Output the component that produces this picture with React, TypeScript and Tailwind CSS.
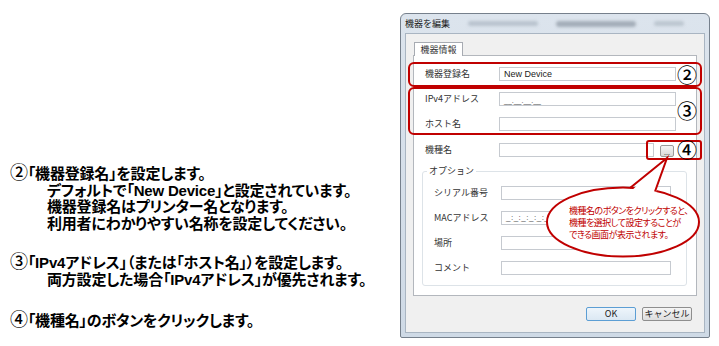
import React from 'react';

const ui = "font-['Noto_Sans_CJK_JP','Liberation_Sans',sans-serif] text-[9px] leading-[12px] text-[#333]";

const Box: React.FC<{ w: string; value?: React.ReactNode }> = ({ w, value }) => (
  <div className={`${w} h-[14px] border border-[#c6cad0] bg-white flex items-center px-[4px] text-[9px] text-[#222] font-['Liberation_Sans',sans-serif]`}>
    {value}
  </div>
);

const Row: React.FC<{ label: string; labelW: string; w: string; value?: React.ReactNode; className?: string; extra?: React.ReactNode }> = ({
  label,
  labelW,
  w,
  value,
  className = '',
  extra,
}) => (
  <div className={`flex items-center h-[14px] ${className}`}>
    <span className={`${labelW} shrink-0 whitespace-nowrap`}>{label}</span>
    <Box w={w} value={value} />
    {extra}
  </div>
);

// circled number, used in the instructions and on the red frames
const Num: React.FC<{ n: string; big?: boolean }> = ({ n, big }) => (
  <span
    className={`font-['Noto_Sans_CJK_JP',sans-serif] [font-feature-settings:normal] text-black font-medium ${
      big ? 'inline-block text-[20px] leading-[18px]' : 'text-[18px] leading-[16px]'
    }`}
  >
    {n}
  </span>
);

const Dialog: React.FC = () => (
  <div className={`relative mt-[13px] w-[310px] h-[325px] flex flex-col border border-[#76808c] rounded-t-[6px] rounded-b-[2px] bg-gradient-to-b from-[#dce4ed] to-[#cfdae6] ${ui}`}>
    {/* title bar */}
    <div className="h-[19px] flex items-center pl-[4px] gap-[18px]">
      <span className="text-[#1a1a1a]">機器を編集</span>
      <span className="w-[70px] h-[5px] rounded-full bg-[#b9c3ce] blur-[1.5px]" />
      <span className="w-[80px] h-[6px] rounded-full bg-[#a4aeb9] blur-[1.5px]" />
      <span className="w-[30px] h-[5px] rounded-full bg-[#bcc6d0] blur-[1.5px]" />
    </div>

    {/* client */}
    <div className="mx-[4px] h-[300px] bg-[#f0f0f0] border border-[#a9b5c2] flex flex-col pt-[8px] px-[7px]">
      <div className="flex">
        <div className="ml-[1px] w-[49px] h-[14px] -mb-[1px] relative z-10 bg-white border border-b-0 border-[#a7abb2] flex items-center justify-center">
          機器情報
        </div>
      </div>
      <div className="h-[241px] bg-white border border-[#b3b7bd] flex flex-col pt-[11px] pb-[9px]">
        <div className="pl-[11px] flex flex-col">
          <Row label="機器登録名" labelW="w-[74px]" w="w-[177px]" value="New Device" />
          <Row
            label="IPv4アドレス"
            labelW="w-[74px]"
            w="w-[177px]"
            className="mt-[11px]"
            value={<span className="text-[7px] leading-[7px] self-end pb-[1px] text-[#444]">__.__.__.__</span>}
          />
          <Row label="ホスト名" labelW="w-[74px]" w="w-[177px]" className="mt-[11px]" />
          <Row
            label="機種名"
            labelW="w-[74px]"
            w="w-[155px]"
            className="mt-[12px]"
            extra={
              <div className="ml-[6px] mt-[2px] w-[14px] h-[12px] rounded-[2px] border border-[#9a9a9a] bg-gradient-to-b from-[#f4f4f4] to-[#d9d9d9] flex items-end justify-center text-[7px] leading-[8px] text-[#444]">
                ...
              </div>
            }
          />
        </div>

        {/* options group */}
        <div className="relative ml-[8px] mt-[14px] w-[265px] h-[115px] border border-[#dde3e8] rounded-[3px] flex flex-col pt-[14px] pl-[11px]">
          <span className="absolute -top-[7px] left-[4px] px-[2px] bg-white">オプション</span>
          <Row label="シリアル番号" labelW="w-[67px]" w="w-[170px]" />
          <Row
            label="MACアドレス"
            labelW="w-[67px]"
            w="w-[170px]"
            className="mt-[11px]"
            value={<span className="text-[8px] text-[#444] tracking-[0.5px]">_:_:_:_:_:_</span>}
          />
          <Row label="場所" labelW="w-[67px]" w="w-[170px]" className="mt-[11px]" />
          <Row label="コメント" labelW="w-[67px]" w="w-[170px]" className="mt-[11px]" />
        </div>
      </div>

      <div className="mt-[11px] flex justify-end gap-[6px] pr-[5px]">
        <button className="w-[50px] h-[14px] rounded-[2px] border border-[#5c9ed4] bg-gradient-to-b from-[#eef5fb] to-[#dbe8f3] text-[9px] leading-[12px] text-[#222]">
          OK
        </button>
        <button className="w-[50px] h-[14px] rounded-[2px] border border-[#8e8e8e] bg-gradient-to-b from-[#f5f5f5] to-[#dedede] text-[9px] leading-[12px] text-[#222]">
          キャンセル
        </button>
      </div>
    </div>

    {/* red annotation frames */}
    <div className="absolute left-[7px] top-[48px] w-[294px] h-[25px] border-2 border-[#c00000] rounded-[6px] flex items-center justify-end pr-[3px]">
      <Num n="②" big />
    </div>
    <div className="absolute left-[7px] top-[73px] w-[294px] h-[48px] border-2 border-[#c00000] rounded-[6px] flex items-center justify-end pr-[3px]">
      <Num n="③" big />
    </div>
    <div className="absolute left-[245px] top-[126px] w-[56px] h-[20px] border-2 border-[#c00000] rounded-[3px] flex items-center justify-end pr-[3px]">
      <Num n="④" big />
    </div>

    {/* speech bubble */}
    <svg className="absolute left-[139px] top-[139px]" width="170" height="110" viewBox="0 0 170 110">
      <ellipse cx="83" cy="69" rx="76" ry="34.5" fill="white" stroke="#c00000" strokeWidth="2" />
      <polygon points="127,5 90,39 115,42" fill="white" />
      <polyline points="90,35 127,5 115,38.5" fill="none" stroke="#c00000" strokeWidth="2" strokeLinejoin="miter" />
    </svg>
    <div className="absolute left-[168px] top-[191px] flex flex-col text-[9px] leading-[12px] tracking-[-0.5px] text-[#c00000] whitespace-nowrap [font-feature-settings:'palt'] font-['Noto_Sans_CJK_JP',sans-serif]">
      <span>機種名のボタンをクリックすると、</span>
      <span>機種を選択して設定することが</span>
      <span>できる画面が表示されます。</span>
    </div>
  </div>
);

export default function App() {
  return (
    <div className="w-[719px] h-[346px] bg-white flex overflow-hidden">
      <div className="w-[400px] shrink-0 pt-[163px] pl-[10px] text-black text-[15px] leading-[16.7px] font-bold tracking-[-0.2px] whitespace-nowrap [font-feature-settings:'palt'] font-['Liberation_Sans','Noto_Sans_CJK_JP',sans-serif]">
        <p>
          <Num n="②" />「機器登録名」を設定します。
        </p>
        <div className="pl-[37px]">
          <p>デフォルトで「New Device」と設定されています。</p>
          <p>機器登録名はプリンター名となります。</p>
          <p>利用者にわかりやすい名称を設定してください。</p>
        </div>
        <p className="mt-[19px]">
          <Num n="③" />「IPv4アドレス」（または「ホスト名」）を設定します。
        </p>
        <p className="pl-[37px]">両方設定した場合「IPv4アドレス」が優先されます。</p>
        <p className="mt-[22px]">
          <Num n="④" />「機種名」のボタンをクリックします。
        </p>
      </div>
      <Dialog />
    </div>
  );
}
